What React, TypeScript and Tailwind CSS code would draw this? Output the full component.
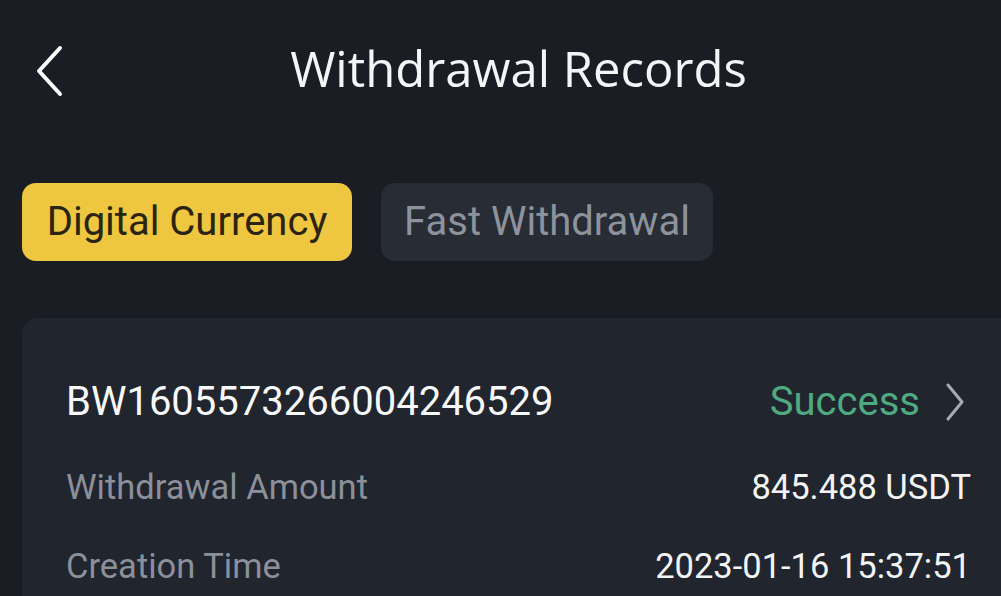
import React, { useState } from 'react';

const tabs = ['Digital Currency', 'Fast Withdrawal'];

const rows = [
    { label: 'Withdrawal Amount', value: '845.488 USDT' },
    { label: 'Creation Time', value: '2023-01-16 15:37:51' }
];

export default function App() {
    const [active, setActive] = useState(0);

    return (
        <div
            className="w-[1001px] h-[596px] overflow-hidden bg-[#1a1d24] text-white"
            style={{ fontFamily: 'Roboto, "Noto Sans", sans-serif' }}
        >
            <header className="relative flex h-[140px] items-center justify-center pl-[36px]">
                <button className="absolute left-[34px] top-[45px] text-white">
                    <svg width="30" height="52" viewBox="0 0 30 52" fill="none">
                        <path
                            d="M26 3 L5 26 L26 49"
                            stroke="currentColor"
                            strokeWidth="4"
                            strokeLinecap="round"
                            strokeLinejoin="round"
                        />
                    </svg>
                </button>
                <h1 className="-mt-[2px] font-['Open_Sans',sans-serif] text-[49px] text-[#f4f5f7]">
                    Withdrawal Records
                </h1>
            </header>

            <div className="mt-[43px] flex gap-[29px] pl-[22px]">
                {tabs.map((t, i) => (
                    <button
                        key={t}
                        onClick={() => setActive(i)}
                        className={
                            i === active
                                ? 'h-[78px] w-[330px] rounded-[14px] bg-[#eec63f] text-[40px] text-[#2a2410]'
                                : 'h-[78px] w-[332px] rounded-[14px] bg-[#272c35] text-[40px] text-[#8d939d]'
                        }
                    >
                        {t}
                    </button>
                ))}
            </div>

            <div className="ml-[22px] mt-[57px] h-[400px] w-[1020px] rounded-[16px] bg-[#21252d] pl-[44px] pr-[76px] pt-[54px]">
                <div className="flex items-center justify-between">
                    <span className="text-[40px] text-[#f7f8fa]">
                        BW1605573266004246529
                    </span>
                    <span className="flex items-center gap-[24px] text-[40px] text-[#4faa82]">
                        Success
                        <svg width="22" height="40" viewBox="0 0 22 40" fill="none">
                            <path
                                d="M4 3 L18 20 L4 37"
                                stroke="#a7abb2"
                                strokeWidth="3"
                                strokeLinecap="round"
                                strokeLinejoin="round"
                            />
                        </svg>
                    </span>
                </div>
                {rows.map((r, i) => (
                    <div
                        key={r.label}
                        className={
                            i === 0
                                ? 'mt-[30px] -mr-[5px] flex items-center justify-between'
                                : 'mt-[27px] -mr-[5px] flex items-center justify-between'
                        }
                    >
                        <span className="text-[34.5px] text-[#8b909a]">
                            {r.label}
                        </span>
                        <span className="whitespace-pre text-[34.5px] text-[#f3f4f6]">
                            {r.value}
                        </span>
                    </div>
                ))}
            </div>
        </div>
    );
}
